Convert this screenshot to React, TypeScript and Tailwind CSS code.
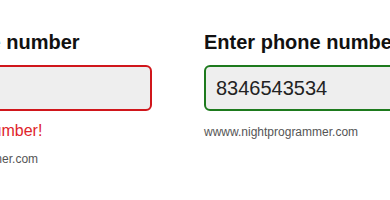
import React from 'react'

type Props = {
  value: string
  error?: string
}

function PhoneField({ value, error }: Props) {
  const invalid = Boolean(error)
  return (
    <div className="w-[268px] shrink-0">
      <h2 className="text-[20px] leading-6 font-bold text-[#111111] mb-[11px] whitespace-nowrap">
        Enter phone number
      </h2>
      <input
        type="text"
        readOnly
        value={value}
        className={
          invalid
            ? 'block w-full h-[46px] rounded-[6px] border-2 border-[#d0161b] bg-[#eeeeee] px-[10px] text-[20px] text-[#222222] outline-none'
            : 'block w-full h-[46px] rounded-[6px] border-2 border-[#1d7a1d] bg-[#eeeeee] px-[10px] text-[20px] text-[#222222] outline-none'
        }
      />
      {invalid && (
        <p className="mt-[10px] text-[16px] leading-5 text-[#e0242b] whitespace-nowrap">{error}</p>
      )}
      <p
        className={
          invalid
            ? 'mt-[11px] text-[12px] leading-[14px] text-[#555555] whitespace-nowrap'
            : 'mt-[14px] text-[12px] leading-[14px] text-[#555555] whitespace-nowrap'
        }
      >
        wwww.nightprogrammer.com
      </p>
    </div>
  )
}

export default function App() {
  return (
    <div
      className="w-[390px] h-[200px] overflow-hidden bg-white"
      style={{ fontFamily: '"Liberation Sans", Arial, sans-serif' }}
    >
      <div className="flex gap-[52px] ml-[-116px] pt-[30px]">
        <PhoneField value="" error="Invalid phone number!" />
        <PhoneField value="8346543534" />
      </div>
    </div>
  )
}
